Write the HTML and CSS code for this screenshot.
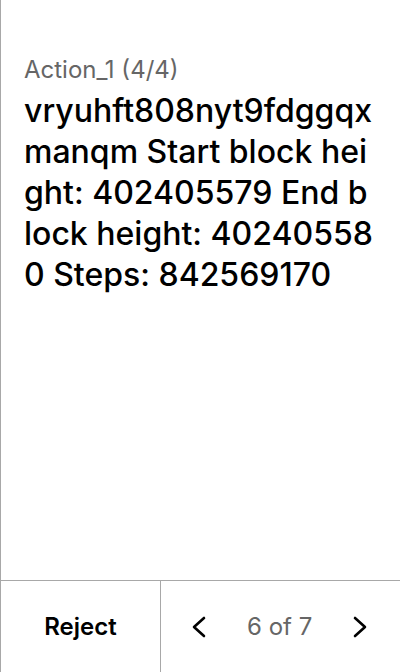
FILE: index.html
```html
<!DOCTYPE html>
<html>
<head>
<meta charset="utf-8">
<link rel="stylesheet" href="styles.css">
</head>
<body>
<div class="screen">
  <main class="content">
    <div class="label">Action_1 (4/4)</div>
    <div class="value">vryuhft808nyt9fdggqx<br>manqm Start block hei<br>ght: 402405579 End b<br>lock height: 40240558<br>0 Steps: 842569170</div>
  </main>
  <footer class="footer">
    <button class="reject">Reject</button>
    <div class="pager">
      <svg class="chev" width="16" height="24" viewBox="0 0 16 24"><path d="M13 3 L3 12 L13 21" fill="none" stroke="#000" stroke-width="2.6" stroke-linecap="round" stroke-linejoin="round"/></svg>
      <span class="count">6 of 7</span>
      <svg class="chev" width="16" height="24" viewBox="0 0 16 24"><path d="M3 3 L13 12 L3 21" fill="none" stroke="#000" stroke-width="2.6" stroke-linecap="round" stroke-linejoin="round"/></svg>
    </div>
  </footer>
</div>
</body>
</html>
```
FILE: styles.css
```css
html, body {
  margin: 0;
  padding: 0;
  background: #fff;
}
.screen {
  width: 400px;
  height: 672px;
  box-sizing: border-box;
  border-left: 1px solid #a8a8a8;
  display: flex;
  flex-direction: column;
  font-family: Inter, "Noto Sans", sans-serif;
  color: #000;
}
.content {
  flex: 1;
  padding: 54px 22px 0 23px;
}
.label {
  font-size: 24px;
  line-height: 32px;
  color: #666;
}
.value {
  margin-top: 4px;
  font-size: 32px;
  line-height: 41px;
  font-weight: 500;
  white-space: nowrap;
}
.footer {
  height: 92px;
  box-sizing: border-box;
  border-top: 1px solid #a8a8a8;
  display: flex;
}
.reject {
  width: 160px;
  border: none;
  border-right: 1px solid #a8a8a8;
  background: #fff;
  font-family: Inter, "Noto Sans", sans-serif;
  font-size: 24px;
  font-weight: 600;
  color: #000;
  padding: 0;
}
.pager {
  flex: 1;
  display: flex;
  align-items: center;
  padding-left: 30px;
  gap: 40px;
}
.count {
  font-size: 24px;
  color: #666;
}
.chev {
  display: block;
}
```
